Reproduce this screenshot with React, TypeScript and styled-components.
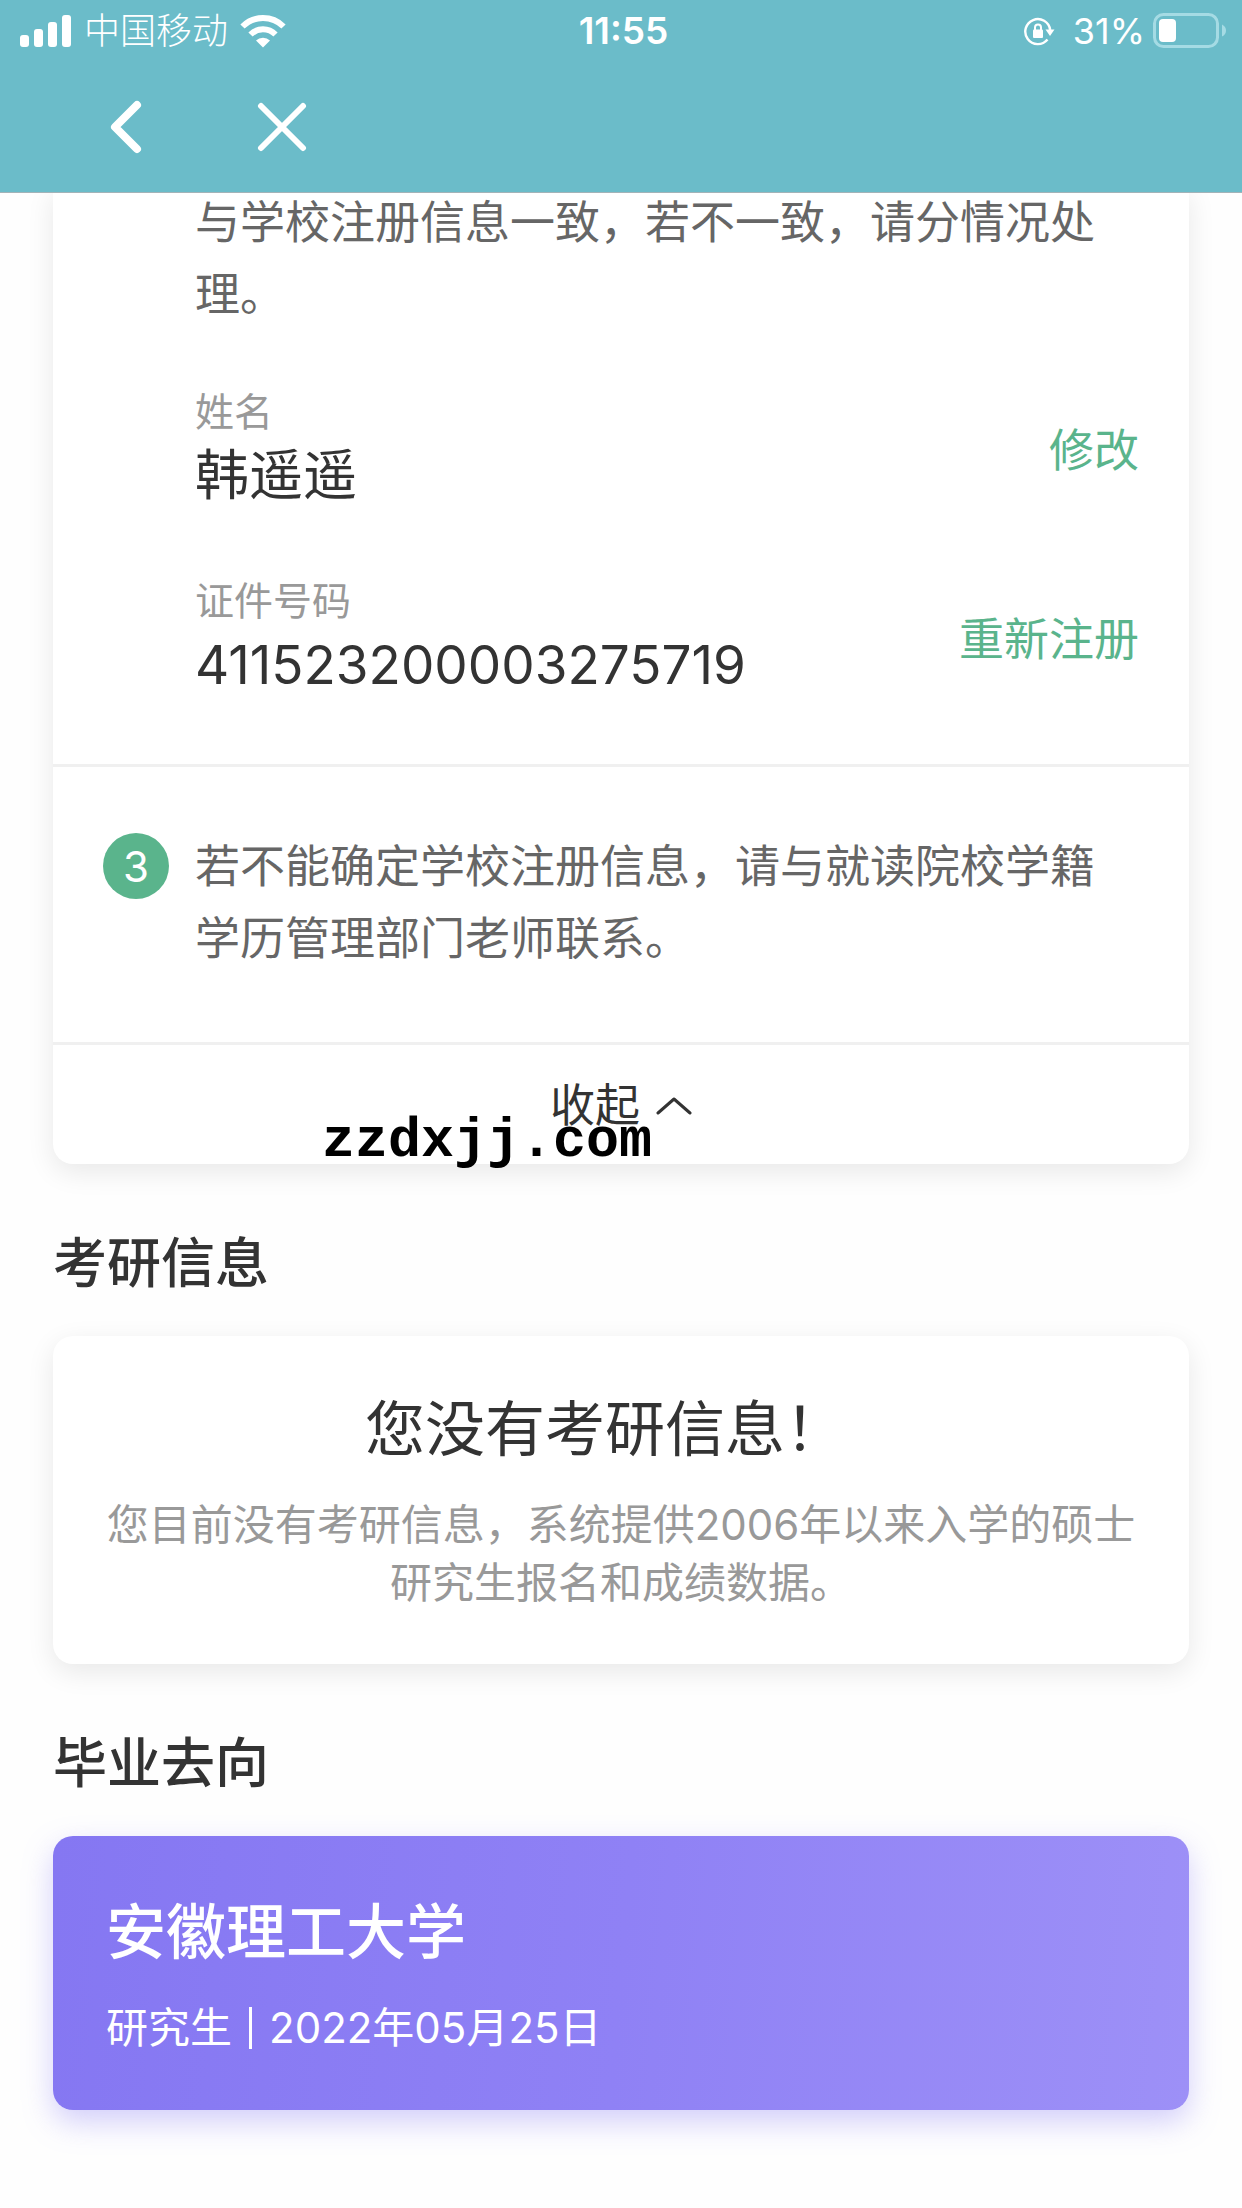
import React from "react";
import styled, { createGlobalStyle } from "styled-components";

const GlobalStyle = createGlobalStyle`
  *, *::before, *::after { box-sizing: border-box; }
  body {
    margin: 0;
    background: #fefefe;
    color: #333;
    font-family: Inter, "Noto Sans CJK SC", sans-serif;
  }
  h2, h3, p, dl, dt, dd { margin: 0; font-weight: 400; }
  button { border: 0; padding: 0; background: none; color: inherit; font: inherit; cursor: pointer; }
`;

const Header = styled.header`
  position: sticky;
  top: 0;
  z-index: 2;
  background: #6bbcc9;
  color: #fff;
  border-bottom: 1px solid #a3b3b8;
`;

const StatusBar = styled.div`
  display: grid;
  grid-template-columns: 1fr auto 1fr;
  align-items: center;
  height: 62px;
  padding: 0 15px 0 20px;
  font-size: 36px;
  line-height: 40px;
`;

const StatusGroup = styled.div<{ $end?: boolean }>`
  display: flex;
  align-items: center;
  justify-content: ${(p) => (p.$end ? "flex-end" : "flex-start")};
  gap: ${(p) => (p.$end ? "8px" : "12px")};
`;

const Carrier = styled.span`
  font-weight: 300;
`;

const Clock = styled.time`
  font-size: 37px;
  font-weight: 600;
`;

const Charge = styled.span`
  margin-left: 10px;
`;

const NavBar = styled.nav`
  display: flex;
  gap: 84px;
  height: 130px;
  padding: 29px 90px;
`;

const NavButton = styled.button`
  display: flex;
  align-items: center;
  justify-content: center;
  width: 72px;
  height: 72px;
`;

const Content = styled.main`
  margin-top: -6px;
  padding: 0 53px 98px;
`;

const Card = styled.section<{ $open?: boolean }>`
  background: #fff;
  border-radius: ${(p) => (p.$open ? "0 0 20px 20px" : "20px")};
  box-shadow: 0 8px 28px rgba(0, 0, 0, 0.09);
`;

const Step = styled.div<{ $first?: boolean }>`
  display: grid;
  grid-template-columns: 66px 1fr;
  column-gap: 26px;
  padding: ${(p) => (p.$first ? "0 50px 64px" : "64px 50px 67px")};
  border-bottom: 3px solid #f0f0f0;
`;

const StepBody = styled.div`
  grid-column: 2;
`;

const Badge = styled.span`
  display: flex;
  align-items: center;
  justify-content: center;
  width: 66px;
  height: 66px;
  margin-top: 2px;
  border-radius: 50%;
  background: #5ab48c;
  color: #fff;
  font-size: 42px;
`;

const StepText = styled.p`
  color: #666;
  font-size: 45px;
  line-height: 72px;
`;

const Fields = styled.div`
  display: grid;
  gap: 61px;
  margin-top: 52px;
`;

const Field = styled.div`
  display: flex;
  align-items: center;
  justify-content: space-between;
`;

const FieldLabel = styled.dt`
  color: #999;
  font-size: 39px;
  line-height: 58px;
`;

const FieldValue = styled.dd<{ $numeric?: boolean }>`
  font-size: ${(p) => (p.$numeric ? "53px" : "54px")};
  line-height: 70px;
`;

const FieldAction = styled.a`
  padding-top: 8px;
  color: #5ab48c;
  font-size: 45px;
  line-height: 72px;
  text-decoration: none;
`;

const Footer = styled.div`
  position: relative;
`;

const Collapse = styled.button`
  display: flex;
  align-items: center;
  justify-content: center;
  gap: 16px;
  width: 100%;
  height: 119px;
  padding-top: 2px;
  font-size: 45px;
  line-height: 72px;
`;

const SiteMark = styled.span`
  position: absolute;
  left: 269px;
  top: 65px;
  color: #000;
  font-family: "Liberation Mono", monospace;
  font-size: 55px;
  font-weight: 700;
  line-height: 64px;
  pointer-events: none;
`;

const SectionTitle = styled.h2`
  padding: 60px 0 32px;
  font-size: 54px;
  font-weight: 500;
  line-height: 80px;
`;

const EmptyCard = styled(Card)`
  padding: 49px 50px 52px;
  text-align: center;
`;

const EmptyTitle = styled.h3`
  padding: 0 32px 23px 0;
  font-size: 60px;
  line-height: 88px;
`;

const EmptyText = styled.p`
  color: #999;
  font-size: 42px;
  line-height: 58px;
`;

const DestinationCard = styled.section`
  padding: 52px 53px 50px;
  border-radius: 20px;
  background: linear-gradient(95deg, #8577f2, #8f81f5 50%, #9d90f7);
  box-shadow: 0 12px 30px rgba(134, 121, 243, 0.36);
  color: #fff;
`;

const School = styled.h3`
  padding-bottom: 19px;
  font-size: 60px;
  font-weight: 500;
  line-height: 88px;
`;

const Detail = styled.p`
  display: flex;
  align-items: center;
  gap: 17px;
  font-size: 42px;
  line-height: 65px;
`;

const DetailRule = styled.span`
  width: 3px;
  height: 42px;
  background: #fff;
`;

const SignalIcon = () => (
  <svg width="52" height="34" viewBox="0 0 52 34" fill="#fff" aria-hidden="true">
    <rect x="0" y="21" width="9" height="12" rx="3" />
    <rect x="14" y="15" width="9" height="18" rx="3" />
    <rect x="28" y="8" width="9" height="25" rx="3" />
    <rect x="42" y="1" width="9" height="32" rx="3" />
  </svg>
);

const WifiIcon = () => (
  <svg width="46" height="34" viewBox="0 0 46 34" aria-hidden="true">
    <g fill="none" stroke="#fff" strokeWidth="6">
      <path d="M2.500 12.500A29 29 0 0 1 43.500 12.500" />
      <path d="M10.500 20.500A17.700 17.700 0 0 1 35.500 20.500" />
    </g>
    <path d="M16 26.500A10 10 0 0 1 30 26.500L23 33.500Z" fill="#fff" />
  </svg>
);

const RotationLockIcon = () => (
  <svg width="32" height="32" viewBox="0 0 32 32" fill="none" stroke="#fff" aria-hidden="true">
    <path d="M24.500 24.500A12.500 12.500 0 1 1 27.200 15" strokeWidth="2.400" />
    <path d="M22.500 14.500H31.500L27 21Z" fill="#fff" stroke="none" />
    <rect x="10" y="14.500" width="10" height="8.500" rx="1" fill="#fff" stroke="none" />
    <path d="M12 15v-2.500a3 3 0 0 1 6 0V15" strokeWidth="2" />
  </svg>
);

const BatteryIcon = () => (
  <svg width="74" height="36" viewBox="0 0 74 36" aria-hidden="true">
    <rect x="1.500" y="1.500" width="63" height="32" rx="9" fill="none" stroke="#a5dbe4" strokeWidth="3" />
    <rect x="6" y="6" width="17" height="23" rx="4" fill="#fff" />
    <path d="M69 11.500q4 2 4 6t-4 6z" fill="#a5dbe4" />
  </svg>
);

const BackIcon = () => (
  <svg width="32" height="54" viewBox="0 0 32 54" fill="none" stroke="#fff" strokeWidth="8" strokeLinecap="round" strokeLinejoin="round" aria-hidden="true">
    <path d="M27 5L5 27L27 49" />
  </svg>
);

const CloseIcon = () => (
  <svg width="50" height="50" viewBox="0 0 50 50" fill="none" stroke="#fff" strokeWidth="6" strokeLinecap="round" aria-hidden="true">
    <path d="M4 4L46 46M46 4L4 46" />
  </svg>
);

const ChevronUpIcon = () => (
  <svg width="36" height="20" viewBox="0 0 36 20" fill="none" stroke="#333" strokeWidth="3" strokeLinecap="round" strokeLinejoin="round" aria-hidden="true">
    <path d="M2 17L18 3L34 17" />
  </svg>
);

const fields = [
  { label: "姓名", value: "韩遥遥", action: "修改", numeric: false },
  { label: "证件号码", value: "411523200003275719", action: "重新注册", numeric: true },
];

export default function App() {
  return (
    <>
      <GlobalStyle />
      <Header>
        <StatusBar>
          <StatusGroup>
            <SignalIcon />
            <Carrier>中国移动</Carrier>
            <WifiIcon />
          </StatusGroup>
          <Clock>11:55</Clock>
          <StatusGroup $end>
            <RotationLockIcon />
            <Charge>31%</Charge>
            <BatteryIcon />
          </StatusGroup>
        </StatusBar>
        <NavBar>
          <NavButton type="button" aria-label="返回">
            <BackIcon />
          </NavButton>
          <NavButton type="button" aria-label="关闭">
            <CloseIcon />
          </NavButton>
        </NavBar>
      </Header>

      <Content>
        <Card $open>
          <Step $first>
            <StepBody>
              <StepText>与学校注册信息一致，若不一致，请分情况处理。</StepText>
              <Fields>
                {fields.map((f) => (
                  <Field key={f.label}>
                    <dl>
                      <FieldLabel>{f.label}</FieldLabel>
                      <FieldValue $numeric={f.numeric}>{f.value}</FieldValue>
                    </dl>
                    <FieldAction href="#">{f.action}</FieldAction>
                  </Field>
                ))}
              </Fields>
            </StepBody>
          </Step>
          <Step>
            <Badge>3</Badge>
            <StepText>若不能确定学校注册信息，请与就读院校学籍学历管理部门老师联系。</StepText>
          </Step>
          <Footer>
            <Collapse type="button">
              收起
              <ChevronUpIcon />
            </Collapse>
            <SiteMark>zzdxjj.com</SiteMark>
          </Footer>
        </Card>

        <SectionTitle>考研信息</SectionTitle>
        <EmptyCard>
          <EmptyTitle>您没有考研信息！</EmptyTitle>
          <EmptyText>您目前没有考研信息，系统提供2006年以来入学的硕士研究生报名和成绩数据。</EmptyText>
        </EmptyCard>

        <SectionTitle>毕业去向</SectionTitle>
        <DestinationCard>
          <School>安徽理工大学</School>
          <Detail>
            <span>研究生</span>
            <DetailRule />
            <span>2022年05月25日</span>
          </Detail>
        </DestinationCard>
      </Content>
    </>
  );
}
